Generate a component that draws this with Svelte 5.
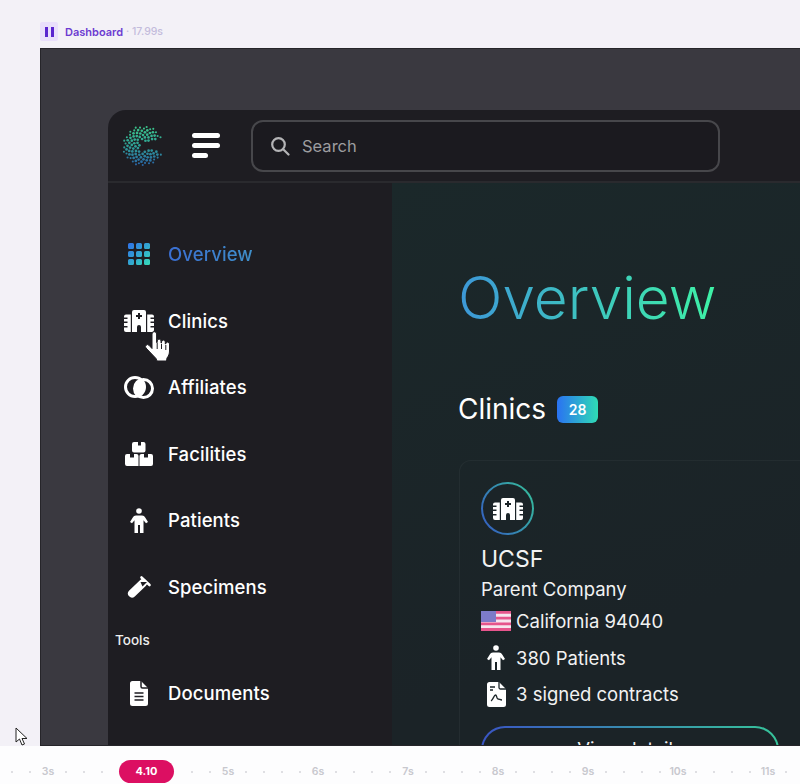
<script>
  const nav = ['Clinics', 'Affiliates', 'Facilities', 'Patients', 'Specimens']

  // timeline: 18px cells, a label every fifth cell starting from the 3s mark.
  // cells 6 to 9 sit under the playhead pill and stay empty
  let ticks = []
  for (let i = 0; i < 44; i++) {
    let k = i - 2
    let hidden = i >= 6 && i <= 9
    ticks.push({ label: k >= 0 && k % 5 === 0 && !hidden ? (3 + k / 5) + 's' : '', hidden })
  }

  // dotted "C" logo, green at the top fading to blue
  function mix(y) {
    let stops = [[60, 198, 138], [47, 159, 150], [42, 98, 168]]
    let t = Math.max(0, Math.min(1.999, (y / 40) * 2))
    let i = Math.floor(t)
    let f = t - i
    let c = stops[i].map((v, n) => Math.round(v + (stops[i + 1][n] - v) * f))
    return `rgb(${c.join(',')})`
  }

  let dots = []
  const total = 120
  for (let i = 1; i <= total; i++) {
    let d = 20 * Math.sqrt(i / total)
    let a = i * 2.39996
    let x = Math.cos(a) * d
    let y = Math.sin(a) * d
    if (x > -3 && y > -4.5 && y < 4.5) continue
    if (x > 14 && y > -7 && y < 7) continue
    dots.push({ x: x + 21, y: y + 21, s: d > 17 ? 1.05 : 1.35, c: mix(y + 20) })
  }
</script>

{#snippet hospital()}
  <svg class="ico" width="30" height="22" viewBox="0 0 30 22" fill="#fff">
    <path fill-rule="evenodd" d="M8 2a2 2 0 0 1 2-2h10a2 2 0 0 1 2 2v20h-5v-5a2 2 0 0 0-4 0v5H8zM14 3v2h-2v2h2v2h2V7h2V5h-2V3z"/>
    <path d="M2 4.500h4.800V22H2a2 2 0 0 1-2-2v-2.500h3.500V16H0v-3h3.500v-1.500H0V9h3.500V7.500H0V6.500a2 2 0 0 1 2-2z"/>
    <path d="M23.200 4.500H28a2 2 0 0 1 2 2v1h-3.500V9H30v2.500h-3.500V13H30v3h-3.500v1.500H30V20a2 2 0 0 1-2 2h-4.800z"/>
  </svg>
{/snippet}

{#snippet person()}
  <svg class="ico" width="18" height="25" viewBox="0 0 18 25" fill="#fff">
    <circle cx="9" cy="3" r="2.800"/>
    <path d="M6 7.500h6c1.500 0 2.500.8 3.200 2L18 14l-2 1.200-2.500-3V25h-3.500v-8H8v8H4.500V12.200L2 15.200 0 14l2.800-4.500c.7-1.200 1.700-2 3.200-2z"/>
  </svg>
{/snippet}

<div class="page">
  <header class="rec">
    <span class="pause"><i></i><i></i></span>
    <span class="rec-name">Dashboard</span>
    <span class="rec-time">· 17.99s</span>
  </header>

  <section class="frame">
    <div class="app">
      <div class="topbar">
        <svg class="logo" width="42" height="42" viewBox="0 0 42 42">
          {#each dots as d}
            <circle cx={d.x} cy={d.y} r={d.s} fill={d.c}/>
          {/each}
        </svg>
        <div class="burger"><i></i><i></i><i class="short"></i></div>
        <div class="search">
          <svg width="20" height="20" viewBox="0 0 20 20" fill="none" stroke="#b4b4b6" stroke-width="2.200" stroke-linecap="round">
            <circle cx="8.500" cy="8.500" r="6.300"/>
            <path d="M13.200 13.200 18.500 18.500"/>
          </svg>
          <span>Search</span>
        </div>
      </div>

      <div class="body">
        <aside class="side">
          <div class="nav-row">
            <span class="nav-ico">
              <svg width="22" height="22" viewBox="0 0 22 22">
                <defs>
                  <linearGradient id="gridG" x1="0" y1="0" x2="1" y2="1">
                    <stop offset="0" stop-color="#2f6fe8"/>
                    <stop offset="1" stop-color="#36dcb8"/>
                  </linearGradient>
                </defs>
                <path fill="url(#gridG)" d="M1.500 0h3A1.500 1.500 0 0 1 6 1.500v3A1.500 1.500 0 0 1 4.500 6h-3A1.500 1.500 0 0 1 0 4.500v-3A1.500 1.500 0 0 1 1.500 0zM9.500 0h3A1.500 1.500 0 0 1 14 1.500v3A1.500 1.500 0 0 1 12.500 6h-3A1.500 1.500 0 0 1 8 4.500v-3A1.500 1.500 0 0 1 9.500 0zM17.500 0h3A1.500 1.500 0 0 1 22 1.500v3A1.500 1.500 0 0 1 20.500 6h-3A1.500 1.500 0 0 1 16 4.500v-3A1.500 1.500 0 0 1 17.500 0zM1.500 8h3A1.500 1.500 0 0 1 6 9.500v3A1.500 1.500 0 0 1 4.500 14h-3A1.500 1.500 0 0 1 0 12.500v-3A1.500 1.500 0 0 1 1.500 8zM9.500 8h3A1.500 1.500 0 0 1 14 9.500v3a1.500 1.500 0 0 1-1.500 1.500h-3A1.500 1.500 0 0 1 8 12.500v-3A1.500 1.500 0 0 1 9.500 8zM17.500 8h3A1.500 1.500 0 0 1 22 9.500v3a1.500 1.500 0 0 1-1.500 1.500h-3a1.500 1.500 0 0 1-1.500-1.500v-3A1.500 1.500 0 0 1 17.500 8zM1.500 16h3A1.500 1.500 0 0 1 6 17.500v3A1.500 1.500 0 0 1 4.500 22h-3A1.500 1.500 0 0 1 0 20.500v-3A1.500 1.500 0 0 1 1.500 16zM9.500 16h3a1.500 1.500 0 0 1 1.500 1.500v3a1.500 1.500 0 0 1-1.500 1.500h-3A1.500 1.500 0 0 1 8 20.500v-3A1.500 1.500 0 0 1 9.500 16zM17.500 16h3a1.500 1.500 0 0 1 1.500 1.500v3a1.500 1.500 0 0 1-1.500 1.500h-3a1.500 1.500 0 0 1-1.500-1.500v-3a1.500 1.500 0 0 1 1.500-1.500z"/>
              </svg>
            </span>
            <span class="active">Overview</span>
          </div>

          {#each nav as item}
            <div class="nav-row">
              <span class="nav-ico">
                {#if item === 'Clinics'}
                  {@render hospital()}
                {:else if item === 'Affiliates'}
                  <svg width="30" height="23" viewBox="0 0 30 23" fill="none" stroke="#fff" stroke-width="3">
                    <defs>
                      <clipPath id="lens"><circle cx="11" cy="11" r="9.500"/></clipPath>
                    </defs>
                    <circle cx="19.500" cy="12.500" r="9" fill="#fff" stroke="none" clip-path="url(#lens)"/>
                    <circle cx="11" cy="11" r="9.500"/>
                    <circle cx="19.500" cy="12.500" r="9"/>
                  </svg>
                {:else if item === 'Facilities'}
                  <svg width="28" height="24" viewBox="0 0 28 24" fill="#fff">
                    <path d="M9 0a2 2 0 0 0-2 2v6.500a2 2 0 0 0 2 2h9.500a2 2 0 0 0 2-2V2a2 2 0 0 0-2-2h-2.500v3.500h-3V0z"/>
                    <path d="M2 12a2 2 0 0 0-2 2v8a2 2 0 0 0 2 2h11.500V14a2 2 0 0 0-2-2H9v3.500H5V12z"/>
                    <path d="M16.500 12a2 2 0 0 0-2 2v10H26a2 2 0 0 0 2-2v-8a2 2 0 0 0-2-2h-3v3.500h-4V12z"/>
                  </svg>
                {:else if item === 'Patients'}
                  {@render person()}
                {:else}
                  <svg width="26" height="24" viewBox="0 0 26 24" fill="none" stroke-linecap="round">
                    <path stroke="#fff" stroke-width="8" d="M6 18.500 17 8"/>
                    <path stroke="#fff" stroke-width="2.600" d="M15.500 2.500 23.500 10"/>
                    <path fill="#1e1d22" d="M14.500 7h6.500l-4.500 4.500z"/>
                  </svg>
                {/if}
              </span>
              <span>{item}</span>
            </div>
          {/each}

          <div class="tools">Tools</div>

          <div class="nav-row">
            <span class="nav-ico">
              <svg width="18" height="25" viewBox="0 0 18 25">
                <path fill="#fff" d="M2.500 0H11l7 7v15.500a2.500 2.500 0 0 1-2.500 2.500h-13A2.500 2.500 0 0 1 0 22.500v-20A2.500 2.500 0 0 1 2.500 0z"/>
                <path fill="none" stroke="#1e1d22" stroke-width="1.500" d="M11 0v5.500a1.500 1.500 0 0 0 1.500 1.500H18M4.500 12h9M4.500 15.500h9M4.500 19h9"/>
              </svg>
            </span>
            <span>Documents</span>
          </div>
        </aside>

        <main class="main">
          <h1>Overview</h1>
          <div class="section-title">
            <h2>Clinics</h2>
            <span class="badge">28</span>
          </div>

          <article class="card">
            <div class="ring">{@render hospital()}</div>
            <div class="name">UCSF</div>
            <div class="parent">Parent Company</div>
            <div class="row flag-row">
              <svg class="flag" width="30" height="20" viewBox="0 0 30 20">
                <rect width="30" height="20" fill="#f6e6ee"/>
                <path fill="#e6558c" d="M0 0h30v2.800H0zM0 5.700h30v2.800H0zM0 11.400h30v2.800H0zM0 17.100h30V20H0z"/>
                <rect width="15" height="11" fill="#7d7bc9"/>
              </svg>
              <span>California 94040</span>
            </div>
            <div class="row">
              <span class="row-ico">{@render person()}</span>
              <span>380 Patients</span>
            </div>
            <div class="row">
              <span class="row-ico">
                <svg width="19" height="25" viewBox="0 0 19 25">
                  <path fill="#fff" d="M2.500 0H12l7 7v15.500a2.500 2.500 0 0 1-2.500 2.500h-14A2.500 2.500 0 0 1 0 22.500v-20A2.500 2.500 0 0 1 2.500 0z"/>
                  <path fill="none" stroke="#1b2428" stroke-width="1.300" d="M12 0v5.500A1.500 1.500 0 0 0 13.500 7H19M3 5h5M3 8h3M4 19c2-1 3-6 4.500-6s1 4 2.500 4 2 1 4 1"/>
                </svg>
              </span>
              <span>3 signed contracts</span>
            </div>
            <div class="view">View details</div>
          </article>
        </main>
      </div>
    </div>
  </section>

  <footer class="timeline">
    {#each ticks as t}
      <span class="cell">{#if t.label}{t.label}{:else if !t.hidden}<i></i>{/if}</span>
    {/each}
    <span class="pill">4.10</span>
  </footer>

  <!-- screen recording pointers -->
  <svg class="hand" width="27" height="31" viewBox="0 0 27 31">
    <path fill="#fff" stroke="#1e1d22" stroke-width="1" stroke-linejoin="round" d="M7 3a2.300 2.300 0 0 1 4.600 0v8.500h.6V10a1.900 1.900 0 0 1 3.800 0v2h.5v-1a1.900 1.900 0 0 1 3.800 0v2h.4a1.900 1.900 0 0 1 3.800 0v7c0 3-1 5-2.500 7l-.5 3H12l-1-2.500L1 17a2 2 0 0 1 3-2.700l3 3.200z"/>
    <path fill="none" stroke="#1e1d22" stroke-width="1" d="M12.200 12v6M16.500 13v5M20.800 14v5"/>
  </svg>
  <svg class="arrow" width="13" height="19" viewBox="0 0 13 19">
    <path fill="#fff" stroke="#222" stroke-width="1" stroke-linejoin="round" d="M1 1v14l3.500-3 2.500 6 2.500-1-2.500-5.500H12z"/>
  </svg>
</div>

<style>
  :global(body) {
    margin: 0;
    background: #f3f1f7;
  }

  .page {
    position: relative;
    width: 800px;
    height: 784px;
    display: flex;
    flex-direction: column;
    overflow: hidden;
    font-family: Inter, "Liberation Sans", sans-serif;
    background: #f3f1f7;
  }

  .rec {
    height: 48px;
    flex: none;
    box-sizing: border-box;
    padding: 22px 0 7px 40px;
    display: flex;
    align-items: center;
    font-size: 11px;
    font-weight: 600;
    color: #6c3bd1;
  }

  .pause {
    width: 18px;
    height: 19px;
    background: #e9dffb;
    border-radius: 2px;
    display: flex;
    justify-content: center;
    align-items: center;
    gap: 3px;
    margin-right: 7px;
  }

  .pause i {
    width: 3px;
    height: 10px;
    background: #5a25cf;
  }

  .rec-time {
    margin-left: 3px;
    color: #c3bcdc;
    font-weight: 500;
    font-size: 10.500px;
  }

  .frame {
    height: 698px;
    flex: none;
    margin-left: 40px;
    box-sizing: border-box;
    padding: 61px 0 0 67px;
    background: #3a3940;
    border: solid #26252a;
    border-width: 1px 0 1px 1px;
    overflow: hidden;
  }

  .app {
    width: 720px;
    height: 680px;
    background: #1e1d22;
    border-radius: 18px 0 0 0;
    overflow: hidden;
  }

  .topbar {
    height: 73px;
    box-sizing: border-box;
    border-bottom: 2px solid #2a2a2e;
    display: flex;
    align-items: center;
    padding-left: 14px;
  }

  .burger {
    width: 28px;
    margin-left: 28px;
    display: flex;
    flex-direction: column;
    gap: 5px;
  }

  .burger i {
    height: 5px;
    border-radius: 3px;
    background: #fff;
  }

  .burger .short {
    width: 16px;
  }

  .search {
    width: 469px;
    height: 52px;
    box-sizing: border-box;
    margin-left: 31px;
    padding-left: 17px;
    border: 2px solid #47474b;
    border-radius: 12px;
    background: #1b1a1f;
    display: flex;
    align-items: center;
    gap: 12px;
    color: #9d9d9f;
    font-size: 16.500px;
  }

  .body {
    display: flex;
    height: 607px;
  }

  .side {
    width: 284px;
    flex: none;
    box-sizing: border-box;
    padding: 38px 0 0 16px;
    color: #fff;
  }

  .nav-row {
    height: 66.500px;
    display: flex;
    align-items: center;
    gap: 14px;
    font-size: 18.500px;
    letter-spacing: 0.1px;
    font-weight: 500;
  }

  .nav-ico {
    width: 30px;
    display: flex;
    justify-content: center;
  }

  .ico {
    display: block;
  }

  .active {
    background: linear-gradient(90deg, #3a6ed2, #3f8fc9);
    -webkit-background-clip: text;
    background-clip: text;
    color: transparent;
  }

  .tools {
    height: 40px;
    line-height: 40px;
    margin-left: -9px;
    font-size: 13.500px;
    font-weight: 500;
    color: #eee;
  }

  .main {
    flex: 1;
    box-sizing: border-box;
    padding-left: 66px;
    background: linear-gradient(160deg, #1b282a, #1b2327 70%);
    color: #fff;
  }

  h1 {
    margin: 0;
    padding-top: 78px;
    font-size: 58.500px;
    line-height: 74px;
    font-weight: 300;
    width: max-content;
    background: linear-gradient(90deg, #3d97d8, #3ef2a6);
    -webkit-background-clip: text;
    background-clip: text;
    color: transparent;
  }

  .section-title {
    display: flex;
    align-items: center;
    gap: 11px;
    height: 40px;
    margin-top: 54px;
  }

  h2 {
    margin: 0;
    font-size: 28px;
    font-weight: 400;
    color: #fff;
  }

  .badge {
    width: 41px;
    height: 27px;
    line-height: 27px;
    text-align: center;
    border-radius: 6px;
    font-size: 14px;
    font-weight: 600;
    background: linear-gradient(90deg, #2a72f2, #2fdcb5);
  }

  .card {
    margin: 31px 0 0 1px;
    padding: 21px 0 0 21px;
    height: 300px;
    border: solid rgba(255, 255, 255, 0.04);
    border-width: 1px 0 0 1px;
    border-radius: 12px 0 0 0;
    font-size: 18.500px;
    color: #f2f2f2;
  }

  .ring {
    width: 53px;
    height: 53px;
    box-sizing: border-box;
    border-radius: 50%;
    border: 2px solid transparent;
    background: linear-gradient(#1b2428, #1b2428) padding-box, linear-gradient(60deg, #3456c4, #36c49a) border-box;
    display: flex;
    align-items: center;
    justify-content: center;
  }

  .name {
    margin-top: 10px;
    font-size: 23px;
    line-height: 28px;
  }

  .parent {
    margin-top: 1px;
    line-height: 30px;
  }

  .row {
    display: flex;
    align-items: center;
    gap: 5px;
    height: 36.500px;
  }

  .flag-row {
    margin-top: -1px;
  }

  .row-ico {
    width: 30px;
    display: flex;
    justify-content: center;
  }

  .view {
    width: 298px;
    height: 48px;
    line-height: 42px;
    box-sizing: border-box;
    margin-top: 13px;
    text-align: center;
    border-radius: 24px;
    border: 2px solid transparent;
    background: linear-gradient(#1b2327, #1b2327) padding-box, linear-gradient(90deg, #3a55c4, #36c49a) border-box;
  }

  .timeline {
    position: relative;
    flex: 1;
    display: flex;
    padding-left: 3px;
    background: #fdfdfe;
    align-items: center;
    color: #c8c8ce;
    font-size: 10.500px;
    font-weight: 600;
    padding-top: 13px;
  }

  .cell {
    width: 18px;
    flex: none;
    display: flex;
    justify-content: center;
  }

  .cell i {
    width: 2px;
    height: 2px;
    border-radius: 50%;
    background: #d4d4da;
  }

  .pill {
    position: absolute;
    left: 119px;
    top: 14px;
    width: 55px;
    height: 23px;
    line-height: 23px;
    border-radius: 12px;
    text-align: center;
    background: #dc0f62;
    color: #fff;
    font-size: 11px;
    font-weight: 700;
  }

  .hand {
    position: absolute;
    left: 145px;
    top: 331px;
  }

  .arrow {
    position: absolute;
    left: 15px;
    top: 727px;
  }
</style>
